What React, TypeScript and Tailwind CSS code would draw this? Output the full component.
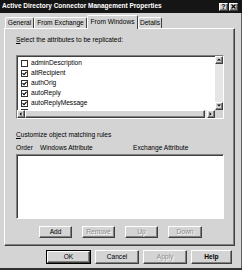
import React from "react";

const raised =
  "border border-t-white border-l-white border-r-[#404040] border-b-[#404040] shadow-[inset_-1px_-1px_0_#808080]";
const sunken =
  "border border-t-[#808080] border-l-[#808080] border-r-white border-b-white shadow-[inset_1px_1px_0_#404040]";

const attributes = [
  { name: "adminDescription", checked: false },
  { name: "altRecipient", checked: true },
  { name: "authOrig", checked: true },
  { name: "autoReply", checked: true },
  { name: "autoReplyMessage", checked: true },
];

function Check({ checked }: { checked: boolean }) {
  return (
    <div className="w-[7px] h-[7px] bg-white border border-[#303030] flex items-center justify-center shrink-0">
      {checked && (
        <svg width="5" height="5" viewBox="0 0 5 5">
          <path d="M0.5 2.2 L2 3.7 L4.6 0.8" fill="none" stroke="#000" strokeWidth="1.1" />
        </svg>
      )}
    </div>
  );
}

function Arrow({ dir }: { dir: "up" | "down" | "left" | "right" }) {
  const d = {
    up: "M1 3.5 L3 1.5 L5 3.5 Z",
    down: "M1 1.5 L3 3.5 L5 1.5 Z",
    left: "M3.5 1 L1.5 3 L3.5 5 Z",
    right: "M1.5 1 L3.5 3 L1.5 5 Z",
  }[dir];
  return (
    <div className={`w-[8px] h-[8px] bg-[#d4d4d4] ${raised} flex items-center justify-center shrink-0`}>
      <svg width="6" height="6" viewBox="0 0 6 6">
        <path d={d} fill="#000" />
      </svg>
    </div>
  );
}

function Button({
  label,
  w,
  h,
  disabled,
  primary,
  bold,
}: {
  label: string;
  w: string;
  h: string;
  disabled?: boolean;
  primary?: boolean;
  bold?: boolean;
}) {
  const inner = (
    <div
      className={`${w} ${h} bg-[#d4d4d4] ${raised} flex items-center justify-center ${
        disabled ? "text-[#8a8a8a] [text-shadow:1px_1px_0_#fff]" : "text-black"
      } ${bold ? "font-bold" : ""}`}
    >
      {label}
    </div>
  );
  if (primary) return <div className="border border-black">{inner}</div>;
  return inner;
}

function Tab({ label, selected, w }: { label: string; selected?: boolean; w: string }) {
  return (
    <div
      className={`${w} ${
        selected ? "h-[14px] -mb-[1px] z-10 bg-[#d4d4d4]" : "h-[11px]"
      } border-t border-l border-t-white border-l-white border-r border-r-[#404040] rounded-t-[2px] flex items-center justify-center whitespace-nowrap leading-none`}
    >
      {label}
    </div>
  );
}

export default function App() {
  return (
    <div className="w-[242px] h-[270px] bg-[#d4d4d4] flex flex-col font-['Liberation_Sans',Arial,sans-serif] text-[6.6px] text-black border-b-2 border-b-[#303030] overflow-hidden leading-none">
      <div className="h-[13px] bg-[#151515] flex items-center pl-[2px] pr-[4px] shrink-0">
        <div className="text-white font-bold text-[6.5px] whitespace-nowrap">
          Active Directory Connector Management Properties
        </div>
        <div className="ml-auto flex gap-[1px]">
          <div className={`w-[9px] h-[8px] bg-[#d4d4d4] ${raised} flex items-center justify-center font-bold text-[7px]`}>?</div>
          <div className={`w-[9px] h-[8px] bg-[#d4d4d4] ${raised} flex items-center justify-center`}>
            <svg width="5" height="5" viewBox="0 0 5 5">
              <path d="M0.5 0.5 L4.5 4.5 M4.5 0.5 L0.5 4.5" stroke="#000" strokeWidth="1.2" />
            </svg>
          </div>
        </div>
      </div>

      <div className="flex flex-col pl-[4px] pr-[6px] pt-[2px] border-r border-r-[#606060] flex-1">
        <div className="flex items-end pl-[1px] relative">
          <Tab label="General" w="w-[29px]" />
          <Tab label="From Exchange" w="w-[53px]" />
          <Tab label="From Windows" w="w-[51px]" selected />
          <Tab label="Details" w="w-[24px]" />
        </div>
        <div className={`h-[218px] ${raised} flex flex-col pl-[11px] pr-[11px]`}>
          <div className="mt-[7px] h-[8px] leading-[8px]">
            <span className="underline">S</span>elect the attributes to be replicated:
          </div>
          <div className={`mt-[11px] h-[64px] w-[208px] bg-white ${sunken} flex flex-col`}>
            <div className="flex flex-1 min-h-0">
              <div className="flex-1 overflow-hidden pt-[2px] pl-[4px] flex flex-col">
                {attributes.map((a) => (
                  <div key={a.name} className="h-[10px] flex items-center gap-[2px] shrink-0">
                    <Check checked={a.checked} />
                    <span className="ml-[1px]">{a.name}</span>
                  </div>
                ))}
                <div className="h-[10px] flex items-start pt-[1px] shrink-0">
                  <div className="w-[7px] h-[7px] bg-white border border-[#303030]" />
                </div>
              </div>
              <div className="w-[8px] flex flex-col bg-[#e6e6e6]">
                <Arrow dir="up" />
                <div className="flex-1" />
                <Arrow dir="down" />
              </div>
            </div>
            <div className="h-[8px] flex bg-[#e6e6e6]">
              <div className="flex-1 flex">
                <Arrow dir="left" />
                <div className={`w-[180px] h-[8px] bg-[#d4d4d4] ${raised}`} />
                <div className="flex-1" />
                <Arrow dir="right" />
              </div>
              <div className="w-[8px] h-[8px] bg-[#d4d4d4]" />
            </div>
          </div>
          <div className="mt-[12px] h-[8px] leading-[8px]">
            <span className="underline">C</span>ustomize object matching rules
          </div>
          <div className="mt-[5px] h-[8px] leading-[8px] flex">
            <span className="w-[24px]">Order</span>
            <span className="w-[93px]">Windows Attribute</span>
            <span>Exchange Attribute</span>
          </div>
          <div className={`mt-[2px] h-[65px] w-[208px] bg-white ${sunken}`} />
          <div className="mt-[7px] flex pl-[23px] gap-[10px]">
            <Button label="Add" w="w-[33px]" h="h-[12px]" />
            <Button label="Remove" w="w-[33px]" h="h-[12px]" disabled />
            <Button label="Up" w="w-[33px]" h="h-[12px]" disabled />
            <Button label="Down" w="w-[34px]" h="h-[12px]" disabled />
          </div>
        </div>
        <div className="mt-[4px] flex pl-[42px] gap-[4px] items-start">
          <Button label="OK" w="w-[43px]" h="h-[12px]" primary />
          <Button label="Cancel" w="w-[44px]" h="h-[14px]" />
          <Button label="Apply" w="w-[44px]" h="h-[14px]" disabled />
          <Button label="Help" w="w-[41px]" h="h-[14px]" bold />
        </div>
      </div>
    </div>
  );
}
